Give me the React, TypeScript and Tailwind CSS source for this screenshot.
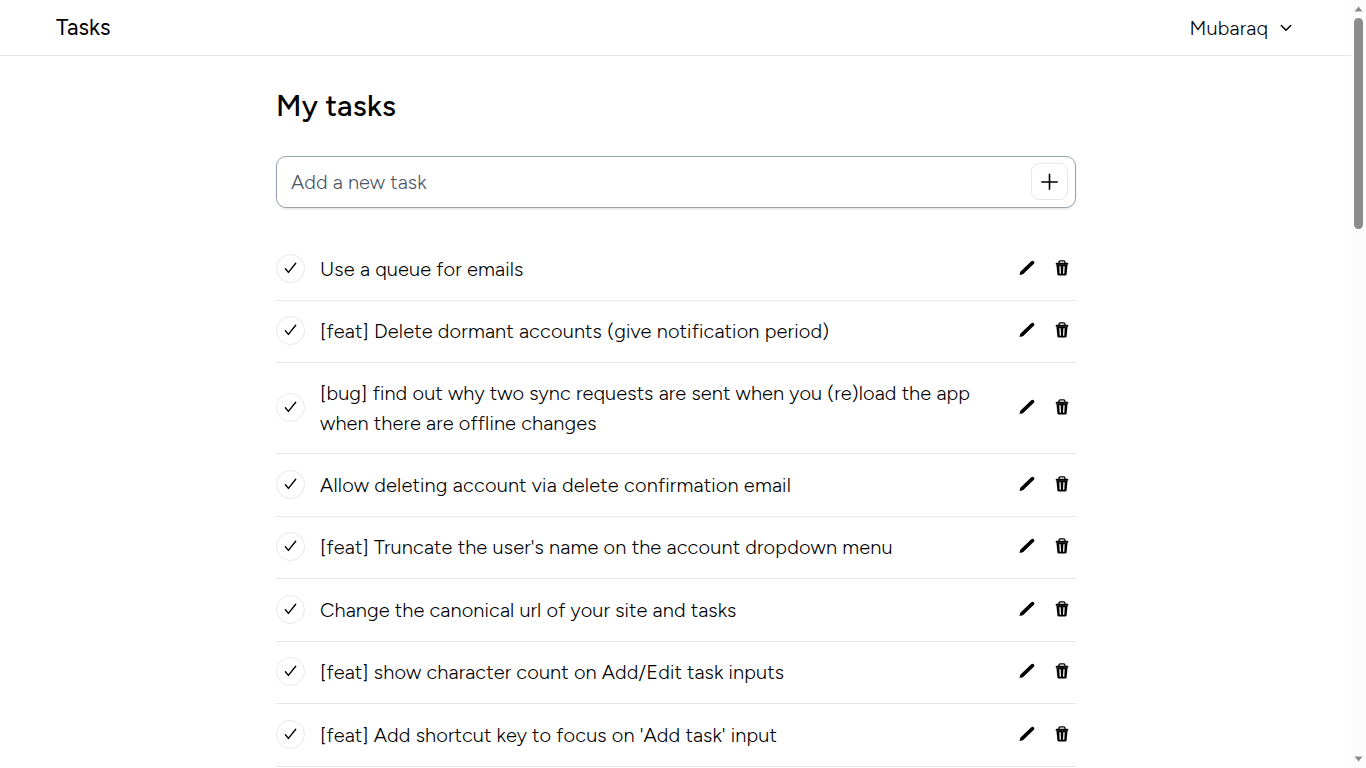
type Task = { lines: string[]; row: string; check: string; spacing: string };

const tasks: Task[] = [
  { lines: ['Use a queue for emails'], row: 'h-[62px] pb-[2px]', check: 'mb-px', spacing: 'tracking-[0.13px]' },
  { lines: ['[feat] Delete dormant accounts (give notification period)'], row: 'h-[62px] pb-[2px]', check: 'mb-px', spacing: 'tracking-[0.14px]' },
  {
    lines: [
      '[bug] find out why two sync requests are sent when you (re)load the app',
      'when there are offline changes',
    ],
    row: 'h-[91px]',
    check: 'mb-[2px]',
    spacing: 'tracking-[0.105px]',
  },
  { lines: ['Allow deleting account via delete confirmation email'], row: 'h-[63px]', check: 'mb-[2px]', spacing: 'tracking-[0.165px]' },
  { lines: ["[feat] Truncate the user's name on the account dropdown menu"], row: 'h-[62px] pb-[2px]', check: 'mb-px', spacing: 'tracking-[0.135px]' },
  { lines: ['Change the canonical url of your site and tasks'], row: 'h-[63px]', check: 'mb-[2px]', spacing: 'tracking-[0.1px]' },
  { lines: ['[feat] show character count on Add/Edit task inputs'], row: 'h-[62px] pb-[2px]', check: 'mb-px', spacing: 'tracking-[0.11px]' },
  { lines: ["[feat] Add shortcut key to focus on 'Add task' input"], row: 'h-[63px]', check: 'mb-[2px]', spacing: 'tracking-[0.105px]' },
];

function CheckIcon() {
  return (
    <svg width="14" height="14" viewBox="0 0 14 14" fill="none" stroke="#000" strokeWidth="1.4" strokeLinecap="round" strokeLinejoin="round">
      <path d="M1.4 7.8 4.4 11.4 11.7 2.2" />
    </svg>
  );
}

function PencilIcon() {
  return (
    <svg width="16" height="16" viewBox="0 0 16 16" fill="#000">
      <path d="M.5 15.1 1.3 11.8 12 1.6C13 .6 14.2.7 14.9 1.4 15.6 2.1 15.6 3.1 14.6 4.1L4 14.2Z" />
    </svg>
  );
}

function TrashIcon() {
  return (
    <svg width="14" height="16" viewBox="0 0 14 16" fill="none" stroke="#000" strokeLinecap="round" strokeLinejoin="round">
      <path d="M4 3V2.2Q4 .9 5.3 .9H8.7Q10 .9 10 2.2V3" strokeWidth="1.3" />
      <path d="M1.6 3.8H12.4" strokeWidth="2" />
      <path d="M1.4 4.4H12.6L11.6 14.2Q11.4 15.6 10 15.6H4Q2.6 15.6 2.4 14.2Z" fill="#000" stroke="none" />
      <path d="M5 6.6 5.3 13.2M9 6.6 8.7 13.2" stroke="#fff" strokeWidth="1.3" />
    </svg>
  );
}

function TaskRow({ task }: { task: Task }) {
  return (
    <li className={`flex shrink-0 items-center border-b border-gray-200 ${task.row}`}>
      <button className={`mr-[15px] flex size-[29px] shrink-0 items-center justify-center rounded-full border border-gray-200 ${task.check}`}>
        <CheckIcon />
      </button>
      <p className={`grow leading-[30px] whitespace-nowrap ${task.spacing}`}>
        {task.lines.map((line) => (
          <span key={line} className="block">{line}</span>
        ))}
      </p>
      <div className="mr-[7px] mb-[2px] flex items-center gap-5">
        <button><PencilIcon /></button>
        <button><TrashIcon /></button>
      </div>
    </li>
  );
}

export default function App() {
  return (
    <div className="flex h-[768px] w-[1366px] overflow-hidden bg-white font-['Figtree','Lato',sans-serif] text-[20px] font-light text-black">
      <div className="flex min-w-0 grow flex-col">
        <header className="flex h-14 shrink-0 items-center justify-between border-b border-gray-200 pr-[59px] pl-14">
          <a className="text-[22.5px] leading-[30px] font-normal">Tasks</a>
          <button className="flex items-center gap-[12px] leading-[30px] tracking-[0.14px]">
            Mubaraq
            <svg width="12" height="8" viewBox="0 0 12 8" fill="none" stroke="#000" strokeWidth="1.5" strokeLinecap="round" strokeLinejoin="round">
              <path d="M1.3 1.5 6 6.2 10.7 1.5" />
            </svg>
          </button>
        </header>
        <main className="flex w-[1076px] flex-col pl-[276px]">
          <h1 className="mt-[29px] text-[30px] leading-[42px] font-medium tracking-[0.18px]">My tasks</h1>
          <form className="mt-[29px] flex h-[52px] items-center justify-between rounded-[10px] border border-gray-400 pr-[7px] pl-[14px] shadow-sm">
            <span className="leading-[30px] tracking-[0.08px] text-gray-600">Add a new task</span>
            <button type="button" className="mb-[1px] flex size-[37px] items-center justify-center rounded-lg border border-gray-200">
              <svg width="17" height="17" viewBox="0 0 17 17" fill="none" stroke="#000" strokeWidth="1.6" strokeLinecap="round">
                <path d="M8.5 1.2V16.2M.8 9H16.2" />
              </svg>
            </button>
          </form>
          <ul className="mt-[31px] flex flex-col">
            {tasks.map((task) => (
              <TaskRow key={task.lines[0]} task={task} />
            ))}
          </ul>
        </main>
      </div>
      <div className="flex w-[15px] shrink-0 flex-col items-center bg-[#fcfcfc] pt-[6px] pb-[6px]">
        <svg width="9" height="6" viewBox="0 0 9 6" fill="#8b8b8b"><path d="M4.5.5 8.5 5.5H.5Z" /></svg>
        <div className="mt-[6px] h-[211px] w-[9px] rounded-full bg-[#8b8b8b]" />
        <svg className="mt-auto" width="9" height="6" viewBox="0 0 9 6" fill="#8b8b8b"><path d="M.5.5H8.5L4.5 5.5Z" /></svg>
      </div>
    </div>
  );
}
